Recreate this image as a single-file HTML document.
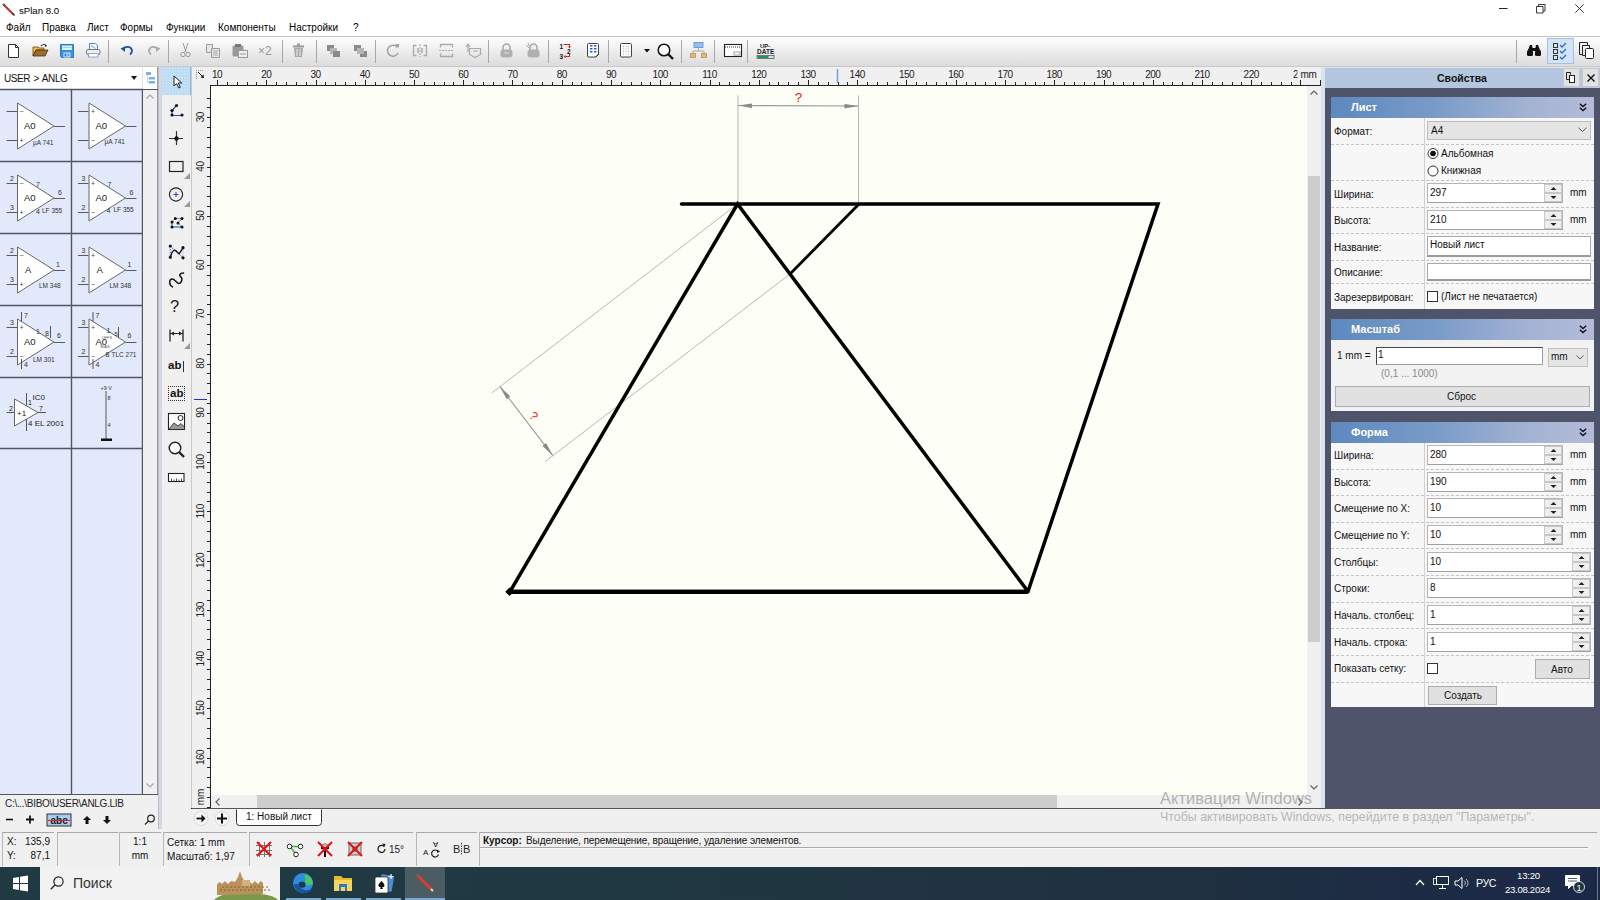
<!DOCTYPE html>
<html><head><meta charset="utf-8">
<style>
*{box-sizing:border-box;margin:0;padding:0}
html,body{width:1600px;height:900px;overflow:hidden;background:#f0f0f0;font-family:"Liberation Sans",sans-serif;font-size:10px;color:#000}
.a{position:absolute}
svg{position:absolute;overflow:visible}
.t{position:absolute;white-space:nowrap;line-height:1}
#title{left:0;top:0;width:1600px;height:36px;background:#fff}
#tb{left:0;top:36px;width:1600px;height:31px;background:linear-gradient(#fdfdfd,#f5f5f5 28%,#ececec 50%,#dcdcdc 100%);border-top:1px solid #c2c2c2;border-bottom:1px solid #c9c9c9}
.sep{position:absolute;top:5px;width:1px;height:23px;background:#a8a8a8}
#lp{left:0;top:67px;width:158px;height:761px;background:#f0f0f0}
#tools{left:162px;top:67px;width:30px;height:741px;background:#f0f0f0;border-right:1px solid #d9d9d9}
#rulh{left:192px;top:67px;width:1129px;height:19px;background:#f0f0f0}
#rulv{left:192px;top:67px;width:19px;height:741px;background:#f0f0f0}
#canvas{left:210px;top:85px;width:1098px;height:711px;background:#fdfdf7;border-left:1px solid #1a1a1a;border-top:1px solid #1a1a1a}
#vscr{left:1307px;top:86px;width:14px;height:709px;background:#f0f0f0}
#hscr{left:211px;top:795px;width:1096px;height:13px;background:#f0f0f0}
#rp{left:1325px;top:67px;width:275px;height:741px;background:#50546a}
#status{left:0;top:828px;width:1600px;height:39px;background:#f0f0f0}
#taskbar{left:0;top:867px;width:1600px;height:33px;background:#1f3540}
</style></head><body>
<!-- TITLE -->
<div id="title" class="a">
  <svg style="left:2px;top:3px" width="13" height="13"><line x1="1.5" y1="1.5" x2="11.5" y2="11.5" stroke="#c0392b" stroke-width="2.2"/><line x1="1" y1="1" x2="3" y2="3" stroke="#555" stroke-width="2"/><line x1="10.5" y1="10.5" x2="12.5" y2="12.5" stroke="#333" stroke-width="1.5"/></svg>
  <div class="t" style="left:19px;top:6px;font-size:9.6px">sPlan 8.0</div>
  <svg style="left:1499px;top:8px" width="9" height="1"><line x1="0" y1="0.5" x2="8.5" y2="0.5" stroke="#222" stroke-width="1"/></svg>
  <svg style="left:1536px;top:4px" width="10" height="10"><path d="M0.5 2.5h6.5v6.5h-6.5z M2.5 2.5v-2h6.5v6.5h-2" fill="none" stroke="#222" stroke-width="0.9"/></svg>
  <svg style="left:1575px;top:4px" width="9" height="9"><path d="M0.3 0.3L8.7 8.7M8.7 0.3L0.3 8.7" stroke="#222" stroke-width="0.9"/></svg>
  <div class="t" style="left:6px;top:23px">Файл</div>
  <div class="t" style="left:42px;top:23px">Правка</div>
  <div class="t" style="left:87px;top:23px">Лист</div>
  <div class="t" style="left:120px;top:23px">Формы</div>
  <div class="t" style="left:166px;top:23px">Функции</div>
  <div class="t" style="left:218px;top:23px">Компоненты</div>
  <div class="t" style="left:289px;top:23px">Настройки</div>
  <div class="t" style="left:353px;top:23px">?</div>
</div>
<!-- TOOLBAR -->
<div id="tb" class="a"></div>
<!-- toolbar icons, absolute page coords -->
<div class="sep" style="left:108px;top:40px"></div>
<div class="sep" style="left:168px;top:40px"></div>
<div class="sep" style="left:282px;top:40px"></div>
<div class="sep" style="left:316px;top:40px"></div>
<div class="sep" style="left:375px;top:40px"></div>
<div class="sep" style="left:488px;top:40px"></div>
<div class="sep" style="left:548px;top:40px"></div>
<div class="sep" style="left:608px;top:40px"></div>
<div class="sep" style="left:681px;top:40px"></div>
<div class="sep" style="left:714px;top:40px"></div>
<div class="sep" style="left:747px;top:40px"></div>
<div class="sep" style="left:1516px;top:40px"></div>
<!-- new -->
<svg style="left:7px;top:43px" width="14" height="16"><path d="M1.5 1.5h7l3 3v10h-10z" fill="#fff" stroke="#333" stroke-width="1"/><path d="M8.5 1.5v3h3" fill="none" stroke="#333"/></svg>
<!-- open -->
<svg style="left:32px;top:43px" width="17" height="15"><path d="M1 4h5l1 1h5v2H4L1 13z" fill="#f0c040" stroke="#6b4a10" stroke-width="0.8"/><path d="M1 13l3-6h12l-3 6z" fill="#9b6a2c" stroke="#4a300c" stroke-width="0.8"/><path d="M9 3c2-2 4-2 5 0" fill="none" stroke="#333" stroke-width="1.2"/><path d="M13 1l2 2-2 1" fill="#333"/></svg>
<!-- save -->
<svg style="left:60px;top:44px" width="14" height="14"><path d="M0.5 0.5h13v13h-12l-1-1z" fill="#3592de" stroke="#2a78c8"/><rect x="2" y="1.5" width="10" height="4.5" fill="#e6eef6"/><path d="M2.5 3.5h9" stroke="#9cc2e8" stroke-width="0.8"/><rect x="3.5" y="8.5" width="7" height="5" fill="#dfe9f5"/><rect x="4.5" y="9.5" width="2" height="3" fill="#2a78c8"/><rect x="7.5" y="9.5" width="2" height="3" fill="#5aa0e0"/></svg>
<!-- print -->
<svg style="left:86px;top:43px" width="15" height="15"><path d="M3.5 0.5h6l2 2v5h-8z" fill="#f4f8fc" stroke="#4a8ad8" stroke-width="1"/><path d="M5 2.5l4.5 3" stroke="#5a9ae0" stroke-width="0.9"/><rect x="0.5" y="6.5" width="13.5" height="5" rx="1.5" fill="#eee" stroke="#777"/><rect x="2.5" y="10.5" width="9.5" height="3.5" fill="#fff" stroke="#8aa8d0"/></svg>
<!-- undo -->
<svg style="left:120px;top:45px" width="14" height="11"><path d="M3 4c3-3 8-3 9 1.5 0 2-1 3-2 4" fill="none" stroke="#1d4fa3" stroke-width="1.8"/><path d="M0.5 3.5L5 1.5 5 7z" fill="#1d4fa3"/></svg>
<!-- redo -->
<svg style="left:147px;top:45px" width="14" height="11"><path d="M11 4c-3-3-8-3-9 1.5 0 2 1 3 2 4" fill="none" stroke="#aaa" stroke-width="1.8"/><path d="M13.5 3.5L9 1.5 9 7z" fill="#aaa"/></svg>
<!-- cut -->
<svg style="left:180px;top:43px" width="11" height="15"><path d="M3 0l3 9M8 0l-3 9" stroke="#9a9a9a" stroke-width="1"/><circle cx="3" cy="11.5" r="2.2" fill="none" stroke="#9a9a9a"/><circle cx="8" cy="11.5" r="2.2" fill="none" stroke="#9a9a9a"/></svg>
<!-- copy -->
<svg style="left:206px;top:44px" width="14" height="14"><path d="M0.5 0.5h6v8h-6z" fill="#e6e6e6" stroke="#9a9a9a"/><path d="M5.5 4.5h8v9h-8z" fill="#e6e6e6" stroke="#9a9a9a"/><path d="M7 7h5M7 9h5M7 11h5" stroke="#aaa"/></svg>
<!-- paste -->
<svg style="left:232px;top:44px" width="16" height="14"><rect x="0.5" y="1.5" width="11" height="11" rx="1.5" fill="#9a9a9a"/><rect x="3" y="0" width="6" height="3" fill="#777"/><rect x="6.5" y="6.5" width="9" height="7" fill="#eee" stroke="#999"/><path d="M8 10h6" stroke="#999"/></svg>
<!-- x2 -->
<div class="t" style="left:258px;top:45px;font-size:12px;color:#9a9a9a">×2</div>
<!-- trash -->
<svg style="left:292px;top:43px" width="13" height="15"><path d="M5 0.5h3v2h4v2h-11v-2h4z" fill="#9a9a9a"/><path d="M2 5h9l-1 9h-7z" fill="#a8a8a8"/><path d="M5 6v7M8 6v7" stroke="#eee"/></svg>
<!-- group front/back -->
<svg style="left:327px;top:45px" width="14" height="13"><rect x="0" y="0" width="7" height="6" fill="#8a8a8a"/><rect x="3" y="3" width="7" height="6" fill="#b5b5b5"/><rect x="6" y="6" width="7" height="6" fill="#8a8a8a"/></svg>
<svg style="left:354px;top:45px" width="14" height="13"><rect x="0" y="0" width="7" height="6" fill="#8a8a8a"/><rect x="6" y="6" width="7" height="6" fill="#8a8a8a"/><rect x="3" y="3" width="7" height="6" fill="#b5b5b5"/></svg>
<!-- rotate -->
<svg style="left:386px;top:43px" width="14" height="15"><path d="M11.5 4.5A5.5 5.5 0 1 0 12 10" fill="none" stroke="#a0a0a0" stroke-width="1.5"/><path d="M9 1h4v4z" fill="#a0a0a0"/></svg>
<!-- mirror h -->
<svg style="left:412px;top:44px" width="16" height="13"><path d="M4.5 1.5h-3v10h3M11.5 1.5h3v10h-3" fill="none" stroke="#aaa" stroke-width="1.3"/><path d="M8 0v13" stroke="#aaa" stroke-dasharray="2 1"/><rect x="5" y="4" width="2" height="5" fill="#bbb"/><rect x="9" y="4" width="2" height="5" fill="#bbb"/></svg>
<!-- mirror v -->
<svg style="left:439px;top:43px" width="15" height="15"><path d="M1.5 4.5v-3h12v3M1.5 10.5v3h12v-3" fill="none" stroke="#aaa" stroke-width="1.3"/><path d="M0 7.5h15" stroke="#aaa" stroke-dasharray="2 1"/></svg>
<!-- move -->
<svg style="left:465px;top:43px" width="17" height="15"><path d="M4.5 5.5h11v6l-5.5 3-5.5-3z" fill="none" stroke="#aaa" stroke-width="1.2"/><path d="M3 9V2M1 4l2-3 2 3" fill="none" stroke="#aaa" stroke-width="1.2"/><path d="M8 8h5" stroke="#aaa"/></svg>
<!-- lock -->
<svg style="left:500px;top:43px" width="13" height="15"><path d="M3 7V4.5a3.5 3.5 0 0 1 7 0V7" fill="none" stroke="#aaa" stroke-width="1.6"/><rect x="0.5" y="6.5" width="12" height="8" rx="3" fill="#b0b0b0"/><path d="M4 10h5" stroke="#ddd"/></svg>
<svg style="left:526px;top:43px" width="14" height="15"><path d="M4 7V4.5a3.5 3.5 0 0 1 7 0V7" fill="none" stroke="#aaa" stroke-width="1.6"/><rect x="1.5" y="6.5" width="12" height="8" rx="3" fill="#b0b0b0"/><path d="M0 2l3 3M2 0l1 3" stroke="#aaa"/></svg>
<!-- renumber -->
<svg style="left:559px;top:43px" width="16" height="16"><path d="M4.5 1.5H10.5V4" fill="none" stroke="#e82020" stroke-width="1.1"/><path d="M9 3.5h3l-1.5 2z" fill="#e82020"/><path d="M10.5 11V13.5H6" fill="none" stroke="#e82020" stroke-width="1.1"/><path d="M6.5 12l-2 1.5 2 1.5z" fill="#e82020"/><text x="0.5" y="6" font-size="6.5" font-weight="bold" font-family="Liberation Sans" fill="#111">1</text><text x="8" y="10.5" font-size="6.5" font-weight="bold" font-family="Liberation Sans" fill="#111">2</text><text x="0.5" y="15.5" font-size="6.5" font-weight="bold" font-family="Liberation Sans" fill="#111">3</text></svg>
<!-- page list -->
<svg style="left:587px;top:43px" width="13" height="15"><path d="M1.5 0.5h9a1 1 0 0 1 1 1v10l-2.5 2.5h-7.5a1 1 0 0 1-1-1v-11.5a1 1 0 0 1 1-1z" fill="#fff" stroke="#444" stroke-width="1"/><path d="M3 2.8h2.5M7 2.8h2.5M3 5.8h2.5M7 5.8h2.5M3 8.8h2.5M7 8.8h2.5" stroke="#2a5ae8" stroke-width="1.6"/><path d="M9 13.5l2.5-2.5" stroke="#222"/></svg>
<!-- page format -->
<svg style="left:620px;top:43px" width="13" height="15"><rect x="0.5" y="0.5" width="11" height="13.5" rx="1" fill="#fff" stroke="#444" stroke-width="1"/><path d="M3 3.5h6M3 6h6M3 8.5h6M3 11h6" stroke="#aaa" stroke-dasharray="1 1.5"/></svg>
<svg style="left:644px;top:49px" width="7" height="4"><path d="M0 0h6l-3 3.5z" fill="#111"/></svg>
<!-- zoom -->
<svg style="left:657px;top:43px" width="18" height="17"><circle cx="7" cy="7" r="5.8" fill="#fff" stroke="#111" stroke-width="1.5"/><path d="M11 11l5 5" stroke="#111" stroke-width="2.4"/></svg>
<!-- tree -->
<svg style="left:690px;top:42px" width="17" height="16"><rect x="4" y="0.5" width="9" height="5" fill="#8fc0f0" stroke="#5a8fd0" stroke-width="0.8"/><path d="M8.5 6v3M3 12v-3h11v3" fill="none" stroke="#aaa"/><rect x="0.5" y="11.5" width="5" height="4" fill="#e0b880" stroke="#c09050" stroke-width="0.8"/><rect x="11.5" y="11.5" width="5" height="4" fill="#e0b880" stroke="#c09050" stroke-width="0.8"/></svg>
<!-- screen -->
<svg style="left:724px;top:44px" width="18" height="13"><rect x="0.5" y="0.5" width="17" height="12" fill="#fff" stroke="#222" stroke-width="1.1"/><path d="M1 3h16" stroke="#333" stroke-dasharray="1 1"/><rect x="10" y="8" width="6" height="3" fill="none" stroke="#888" stroke-width="0.8"/></svg>
<!-- update -->
<svg style="left:756px;top:42px" width="19" height="17"><text x="4" y="6" font-size="6" font-weight="bold" font-family="Liberation Sans" fill="#222">UP-</text><text x="1" y="12" font-size="6.5" font-weight="bold" font-family="Liberation Sans" fill="#222">DATE</text><rect x="1" y="13.5" width="17" height="3" fill="#ddd" stroke="#333" stroke-width="0.6"/><rect x="1.5" y="14" width="11" height="2" fill="#1a9a5a"/></svg>
<!-- right: binoculars -->
<svg style="left:1527px;top:44px" width="14" height="13"><path d="M1 6l2-5h2l1 5zM8 6l1-5h2l2 5z" fill="#111"/><rect x="0" y="6" width="6" height="6" rx="1.5" fill="#111"/><rect x="8" y="6" width="6" height="6" rx="1.5" fill="#111"/><rect x="5" y="4" width="4" height="3" fill="#111"/></svg>
<div class="a" style="left:1547px;top:38px;width:27px;height:26px;background:#d4e4f4;border:1px solid #9fc3e8"></div>
<svg style="left:1552px;top:42px" width="18" height="18"><rect x="1.5" y="1.5" width="4" height="4" fill="none" stroke="#333"/><rect x="1.5" y="7.5" width="4" height="4" fill="none" stroke="#333"/><rect x="1.5" y="13.5" width="4" height="4" fill="none" stroke="#333"/><path d="M8 3l2 2 4-4M8 9l2 2 4-4M8 15l2 2 4-4" fill="none" stroke="#2a6ae0" stroke-width="1.3"/></svg>
<svg style="left:1579px;top:42px" width="16" height="18"><path d="M0.5 0.5h8v3M0.5 0.5v12h3" fill="none" stroke="#222"/><path d="M3.5 3.5h7v3M3.5 3.5v10h3" fill="none" stroke="#222"/><rect x="6.5" y="6.5" width="8" height="10" rx="1" fill="#fff" stroke="#222"/></svg>

<svg style="left:0;top:0" width="1600" height="900" font-family="Liberation Sans"><rect x="192" y="67" width="1129" height="19" fill="#f0f0f0"/><rect x="192" y="67" width="19" height="741" fill="#f0f0f0"/><path d="M217.5 80V85M227.5 82V85M237.5 82V85M247.5 82V85M256.5 82V85M266.5 80V85M276.5 82V85M286.5 82V85M296.5 82V85M306.5 82V85M316.5 80V85M325.5 82V85M335.5 82V85M345.5 82V85M355.5 82V85M365.5 80V85M375.5 82V85M384.5 82V85M394.5 82V85M404.5 82V85M414.5 80V85M424.5 82V85M434.5 82V85M444.5 82V85M453.5 82V85M463.5 80V85M473.5 82V85M483.5 82V85M493.5 82V85M503.5 82V85M512.5 80V85M522.5 82V85M532.5 82V85M542.5 82V85M552.5 82V85M562.5 80V85M572.5 82V85M581.5 82V85M591.5 82V85M601.5 82V85M611.5 80V85M621.5 82V85M631.5 82V85M641.5 82V85M650.5 82V85M660.5 80V85M670.5 82V85M680.5 82V85M690.5 82V85M700.5 82V85M710.5 80V85M719.5 82V85M729.5 82V85M739.5 82V85M749.5 82V85M759.5 80V85M769.5 82V85M778.5 82V85M788.5 82V85M798.5 82V85M808.5 80V85M818.5 82V85M828.5 82V85M838.5 82V85M847.5 82V85M857.5 80V85M867.5 82V85M877.5 82V85M887.5 82V85M897.5 82V85M906.5 80V85M916.5 82V85M926.5 82V85M936.5 82V85M946.5 82V85M956.5 80V85M966.5 82V85M975.5 82V85M985.5 82V85M995.5 82V85M1005.5 80V85M1015.5 82V85M1025.5 82V85M1035.5 82V85M1044.5 82V85M1054.5 80V85M1064.5 82V85M1074.5 82V85M1084.5 82V85M1094.5 82V85M1104.5 80V85M1113.5 82V85M1123.5 82V85M1133.5 82V85M1143.5 82V85M1153.5 80V85M1163.5 82V85M1172.5 82V85M1182.5 82V85M1192.5 82V85M1202.5 80V85M1212.5 82V85M1222.5 82V85M1232.5 82V85M1241.5 82V85M1251.5 80V85M1261.5 82V85M1271.5 82V85M1281.5 82V85M1291.5 82V85M1300.5 80V85M1320.5 80V85" stroke="#222" stroke-width="1"/><text x="217.0" y="77.5" font-size="10" text-anchor="middle" fill="#222" letter-spacing="-0.5">10</text><text x="266.2" y="77.5" font-size="10" text-anchor="middle" fill="#222" letter-spacing="-0.5">20</text><text x="315.5" y="77.5" font-size="10" text-anchor="middle" fill="#222" letter-spacing="-0.5">30</text><text x="364.8" y="77.5" font-size="10" text-anchor="middle" fill="#222" letter-spacing="-0.5">40</text><text x="414.0" y="77.5" font-size="10" text-anchor="middle" fill="#222" letter-spacing="-0.5">50</text><text x="463.2" y="77.5" font-size="10" text-anchor="middle" fill="#222" letter-spacing="-0.5">60</text><text x="512.5" y="77.5" font-size="10" text-anchor="middle" fill="#222" letter-spacing="-0.5">70</text><text x="561.8" y="77.5" font-size="10" text-anchor="middle" fill="#222" letter-spacing="-0.5">80</text><text x="611.0" y="77.5" font-size="10" text-anchor="middle" fill="#222" letter-spacing="-0.5">90</text><text x="660.2" y="77.5" font-size="10" text-anchor="middle" fill="#222" letter-spacing="-0.5">100</text><text x="709.5" y="77.5" font-size="10" text-anchor="middle" fill="#222" letter-spacing="-0.5">110</text><text x="758.8" y="77.5" font-size="10" text-anchor="middle" fill="#222" letter-spacing="-0.5">120</text><text x="808.0" y="77.5" font-size="10" text-anchor="middle" fill="#222" letter-spacing="-0.5">130</text><text x="857.2" y="77.5" font-size="10" text-anchor="middle" fill="#222" letter-spacing="-0.5">140</text><text x="906.5" y="77.5" font-size="10" text-anchor="middle" fill="#222" letter-spacing="-0.5">150</text><text x="955.8" y="77.5" font-size="10" text-anchor="middle" fill="#222" letter-spacing="-0.5">160</text><text x="1005.0" y="77.5" font-size="10" text-anchor="middle" fill="#222" letter-spacing="-0.5">170</text><text x="1054.2" y="77.5" font-size="10" text-anchor="middle" fill="#222" letter-spacing="-0.5">180</text><text x="1103.5" y="77.5" font-size="10" text-anchor="middle" fill="#222" letter-spacing="-0.5">190</text><text x="1152.8" y="77.5" font-size="10" text-anchor="middle" fill="#222" letter-spacing="-0.5">200</text><text x="1202.0" y="77.5" font-size="10" text-anchor="middle" fill="#222" letter-spacing="-0.5">210</text><text x="1251.2" y="77.5" font-size="10" text-anchor="middle" fill="#222" letter-spacing="-0.5">220</text><text x="1293" y="77.5" font-size="10" fill="#222">2</text><rect x="1297.5" y="68" width="23" height="11" fill="#f0f0f0"/><text x="1300.5" y="77.5" font-size="10" fill="#222" letter-spacing="-0.3">mm</text><path d="M837.5 69V83" stroke="#6aa6e6" stroke-width="1.5"/><path d="M207 98.5H210M207 107.5H210M207 117.5H210M207 127.5H210M207 137.5H210M207 147.5H210M207 157.5H210M207 167.5H210M207 176.5H210M207 186.5H210M207 196.5H210M207 206.5H210M207 216.5H210M207 226.5H210M207 236.5H210M207 245.5H210M207 255.5H210M207 265.5H210M207 275.5H210M207 285.5H210M207 295.5H210M207 304.5H210M207 314.5H210M207 324.5H210M207 334.5H210M207 344.5H210M207 354.5H210M207 364.5H210M207 373.5H210M207 383.5H210M207 393.5H210M207 403.5H210M207 413.5H210M207 423.5H210M207 432.5H210M207 442.5H210M207 452.5H210M207 462.5H210M207 472.5H210M207 482.5H210M207 492.5H210M207 501.5H210M207 511.5H210M207 521.5H210M207 531.5H210M207 541.5H210M207 551.5H210M207 561.5H210M207 570.5H210M207 580.5H210M207 590.5H210M207 600.5H210M207 610.5H210M207 620.5H210M207 629.5H210M207 639.5H210M207 649.5H210M207 659.5H210M207 669.5H210M207 679.5H210M207 689.5H210M207 698.5H210M207 708.5H210M207 718.5H210M207 728.5H210M207 738.5H210M207 748.5H210M207 758.5H210M207 767.5H210M207 777.5H210M207 787.5H210M207 797.5H210M207 807.5H210" stroke="#222" stroke-width="1"/><text x="0" y="0" font-size="10" text-anchor="middle" fill="#222" letter-spacing="-0.5" transform="translate(204,117.3) rotate(-90)">30</text><text x="0" y="0" font-size="10" text-anchor="middle" fill="#222" letter-spacing="-0.5" transform="translate(204,166.6) rotate(-90)">40</text><text x="0" y="0" font-size="10" text-anchor="middle" fill="#222" letter-spacing="-0.5" transform="translate(204,215.8) rotate(-90)">50</text><text x="0" y="0" font-size="10" text-anchor="middle" fill="#222" letter-spacing="-0.5" transform="translate(204,265.1) rotate(-90)">60</text><text x="0" y="0" font-size="10" text-anchor="middle" fill="#222" letter-spacing="-0.5" transform="translate(204,314.3) rotate(-90)">70</text><text x="0" y="0" font-size="10" text-anchor="middle" fill="#222" letter-spacing="-0.5" transform="translate(204,363.6) rotate(-90)">80</text><text x="0" y="0" font-size="10" text-anchor="middle" fill="#222" letter-spacing="-0.5" transform="translate(204,412.8) rotate(-90)">90</text><text x="0" y="0" font-size="10" text-anchor="middle" fill="#222" letter-spacing="-0.5" transform="translate(204,462.1) rotate(-90)">100</text><text x="0" y="0" font-size="10" text-anchor="middle" fill="#222" letter-spacing="-0.5" transform="translate(204,511.3) rotate(-90)">110</text><text x="0" y="0" font-size="10" text-anchor="middle" fill="#222" letter-spacing="-0.5" transform="translate(204,560.5) rotate(-90)">120</text><text x="0" y="0" font-size="10" text-anchor="middle" fill="#222" letter-spacing="-0.5" transform="translate(204,609.8) rotate(-90)">130</text><text x="0" y="0" font-size="10" text-anchor="middle" fill="#222" letter-spacing="-0.5" transform="translate(204,659.0) rotate(-90)">140</text><text x="0" y="0" font-size="10" text-anchor="middle" fill="#222" letter-spacing="-0.5" transform="translate(204,708.3) rotate(-90)">150</text><text x="0" y="0" font-size="10" text-anchor="middle" fill="#222" letter-spacing="-0.5" transform="translate(204,757.5) rotate(-90)">160</text><text x="0" y="0" font-size="10" text-anchor="middle" fill="#222" transform="translate(204,797) rotate(-90)">mm</text><path d="M194 399.5H207" stroke="#2a2ae8" stroke-width="1"/><path d="M198 72l5 5" stroke="#111" stroke-width="1"/><path d="M204 78l-3.5-0.5 3-3z" fill="#111"/><path d="M196 70.5h1M198 70.5h1M200 70.5h1M202 70.5h1M196.5 72v1M196.5 74v1M196.5 76v1M196.5 78v1" stroke="#999"/><path d="M191.5 67V809M210.5 85V809M210 85.5H1321" stroke="#222" stroke-width="1"/><path d="M191.5 67V808" stroke="#a0a0a0" stroke-width="1"/></svg>
<svg style="left:0;top:0" width="1600" height="900" font-family="Liberation Sans"><rect x="211" y="86" width="1096" height="709" fill="#fdfef5"/><path d="M738 95.5V204M858.5 95.5V204" stroke="#b5b5b5" stroke-width="1"/><path d="M738 105.5L858.5 106" stroke="#999" stroke-width="1.2"/><path d="M738 105.5L752 103.5V108zM858.5 106L844.5 104V108.5z" fill="#8a8a8a"/><text x="798.5" y="102" font-size="13.5" text-anchor="middle" fill="#e82020">?</text><path d="M737.5 204L492 392.8M790 274L545 461.7" stroke="#b8b8b8" stroke-width="1"/><path d="M500 386.7L552.8 455.6" stroke="#999" stroke-width="1.1"/><path d="M500.0 386.7L506.7 399.2L510.3 396.4zM552.8 455.6L542.5 445.9L546.1 443.1z" fill="#8a8a8a"/><text x="0" y="0" font-size="12" text-anchor="middle" fill="#e82020" transform="translate(531,419) rotate(42)">?</text><path d="M681.5 204H1158L1028 591.5H510L737.5 204L1028 591.5" fill="none" stroke="#000" stroke-width="3.5" stroke-linejoin="miter" stroke-linecap="round"/><path d="M510 591.8H1028" stroke="#000" stroke-width="4.2"/><path d="M859 204L790 274" stroke="#000" stroke-width="2.8"/><rect x="506.5" y="588.8" width="6" height="6" transform="rotate(45 509.5 591.8)" fill="#000"/></svg>
<div class="a" style="left:0;top:67px;width:142px;height:22px;background:#fff"></div>
<div class="t" style="left:4px;top:74px;font-size:10px;color:#111;letter-spacing:-0.4px;word-spacing:1px">USER &gt; ANLG</div>
<svg style="left:131px;top:76px" width="6" height="4"><path d="M0 0h6L3 4z" fill="#111"/></svg>
<div class="a" style="left:142px;top:67px;width:1px;height:22px;background:#e4e4e4"></div>
<div class="a" style="left:143px;top:67px;width:14px;height:22px;background:#fff"></div>
<svg style="left:145px;top:71px" width="11" height="13"><rect x="1" y="1" width="5" height="3" fill="#7ab0e8"/><rect x="4" y="6" width="6" height="2.5" fill="#7ab0e8"/><rect x="4" y="10" width="6" height="2.5" fill="#7ab0e8"/><path d="M2.5 4v7.5h1.5M2.5 7.5h1.5" stroke="#bbb" stroke-width="0.6" fill="none"/></svg>
<svg class="a" style="left:0;top:0" width="160" height="830" font-family="Liberation Sans"><rect x="0" y="89" width="143" height="706" fill="#e1e9fb"/><path d="M0 89.5H143M71.5 89V795M142.5 89V795M0 161.5H143M0 233.5H143M0 305.5H143M0 377.5H143M0 448.5H143" stroke="#50555f" stroke-width="1.4"/><g transform="translate(0,89)"><path d="M6.5 22.5H17M6.5 51.5H17M54 37.5H65" stroke="#4a4a4a" stroke-width="0.9"/><path d="M17.5 14L17.5 60L54 37Z" fill="#fff" stroke="#666" stroke-width="1"/><text x="24" y="39.5" font-size="9.5" fill="#222">A0</text><text x="19.5" y="24.5" font-size="7" fill="#444">−</text><text x="19.5" y="53.5" font-size="7" fill="#444">+</text><text x="33" y="55.5" font-size="6.5" fill="#333">µA 741</text></g><g transform="translate(71.5,89)"><path d="M6.5 22.5H17M6.5 51.5H17M54 37.5H65" stroke="#4a4a4a" stroke-width="0.9"/><path d="M17.5 14L17.5 60L54 37Z" fill="#fff" stroke="#666" stroke-width="1"/><text x="24" y="39.5" font-size="9.5" fill="#222">A0</text><text x="19.5" y="24.5" font-size="7" fill="#444">+</text><text x="19.5" y="53.5" font-size="7" fill="#444">−</text><text x="33" y="55" font-size="6.5" fill="#333">µA 741</text></g><g transform="translate(0,161)"><path d="M6.5 22.5H17M6.5 51.5H17M54 37.5H65" stroke="#4a4a4a" stroke-width="0.9"/><path d="M17.5 14L17.5 60L54 37Z" fill="#fff" stroke="#666" stroke-width="1"/><text x="24" y="39.5" font-size="9.5" fill="#222">A0</text><text x="19.5" y="24.5" font-size="7" fill="#444">−</text><text x="19.5" y="53.5" font-size="7" fill="#444">+</text><text x="10" y="20" font-size="7" fill="#333">2</text><text x="10" y="49" font-size="7" fill="#333">3</text><text x="58" y="34" font-size="7" fill="#333">6</text><text x="36" y="25.5" font-size="7" fill="#333">7</text><text x="36" y="52.5" font-size="7" fill="#333">4</text><text x="42" y="52" font-size="6.5" fill="#333">LF 355</text></g><g transform="translate(71.5,161)"><path d="M6.5 22.5H17M6.5 51.5H17M54 37.5H65" stroke="#4a4a4a" stroke-width="0.9"/><path d="M17.5 14L17.5 60L54 37Z" fill="#fff" stroke="#666" stroke-width="1"/><text x="24" y="39.5" font-size="9.5" fill="#222">A0</text><text x="19.5" y="24.5" font-size="7" fill="#444">+</text><text x="19.5" y="53.5" font-size="7" fill="#444">−</text><text x="10" y="20" font-size="7" fill="#333">3</text><text x="10" y="49" font-size="7" fill="#333">2</text><text x="58" y="34" font-size="7" fill="#333">6</text><text x="36" y="25.5" font-size="7" fill="#333">7</text><text x="35" y="52" font-size="7" fill="#333">4</text><text x="42" y="51" font-size="6.5" fill="#333">LF 355</text></g><g transform="translate(0,233)"><path d="M6.5 22.5H17M6.5 51.5H17M54 37.5H65" stroke="#4a4a4a" stroke-width="0.9"/><path d="M17.5 14L17.5 60L54 37Z" fill="#fff" stroke="#666" stroke-width="1"/><text x="25" y="39.5" font-size="9.5" fill="#222">A</text><text x="19.5" y="24.5" font-size="7" fill="#444">−</text><text x="19.5" y="53.5" font-size="7" fill="#444">+</text><text x="10" y="20" font-size="7" fill="#333">2</text><text x="10" y="49" font-size="7" fill="#333">3</text><text x="56" y="34" font-size="7" fill="#333">1</text><text x="39" y="55" font-size="6.5" fill="#333">LM 348</text></g><g transform="translate(71.5,233)"><path d="M6.5 22.5H17M6.5 51.5H17M54 37.5H65" stroke="#4a4a4a" stroke-width="0.9"/><path d="M17.5 14L17.5 60L54 37Z" fill="#fff" stroke="#666" stroke-width="1"/><text x="25" y="39.5" font-size="9.5" fill="#222">A</text><text x="19.5" y="24.5" font-size="7" fill="#444">+</text><text x="19.5" y="53.5" font-size="7" fill="#444">−</text><text x="10" y="20" font-size="7" fill="#333">3</text><text x="10" y="49" font-size="7" fill="#333">2</text><text x="56" y="34" font-size="7" fill="#333">1</text><text x="38" y="55" font-size="6.5" fill="#333">LM 348</text></g><g transform="translate(0,305)"><path d="M6.5 22.5H17M6.5 51.5H17M54 37.5H65" stroke="#4a4a4a" stroke-width="0.9"/><path d="M17.5 14L17.5 60L54 37Z" fill="#fff" stroke="#666" stroke-width="1"/><text x="24" y="39.5" font-size="9.5" fill="#222">A0</text><text x="19.5" y="24.5" font-size="7" fill="#444">+</text><text x="19.5" y="53.5" font-size="7" fill="#444">−</text><path d="M21.5 7V17M21.5 54V64M50.5 21V33" stroke="#555"/><text x="10" y="20" font-size="7" fill="#333">3</text><text x="10" y="49" font-size="7" fill="#333">2</text><text x="57" y="33" font-size="7" fill="#333">6</text><text x="24" y="13" font-size="7" fill="#333">7</text><text x="24" y="62" font-size="7" fill="#333">4</text><text x="36" y="29" font-size="7" fill="#333">1</text><text x="45" y="31" font-size="7" fill="#333">8</text><text x="33" y="57" font-size="6.5" fill="#333">LM 301</text></g><g transform="translate(71.5,305)"><path d="M6.5 22.5H17M6.5 51.5H17M54 37.5H65" stroke="#4a4a4a" stroke-width="0.9"/><path d="M17.5 14L17.5 60L54 37Z" fill="#fff" stroke="#666" stroke-width="1"/><text x="24" y="39.5" font-size="9.5" fill="#222">A0</text><text x="19.5" y="24.5" font-size="7" fill="#444">+</text><text x="19.5" y="53.5" font-size="7" fill="#444">−</text><path d="M21.5 7V17M21.5 54V64M47 22V33" stroke="#555"/><text x="10" y="20" font-size="7" fill="#333">3</text><text x="10" y="49" font-size="7" fill="#333">2</text><text x="56" y="33" font-size="7" fill="#333">6</text><text x="24" y="13" font-size="7" fill="#333">7</text><text x="24" y="62" font-size="7" fill="#333">4</text><text x="35" y="28" font-size="7" fill="#333">1</text><text x="43" y="31" font-size="6" fill="#333">5</text><text x="30" y="34" font-size="4" fill="#555">OFFS</text><text x="29" y="43" font-size="4" fill="#555">BIAS</text><text x="34" y="52" font-size="7" fill="#333">8</text><text x="40" y="52" font-size="6.5" fill="#333">TLC 271</text></g><g transform="translate(0,377)"><path d="M6.5 35.5H15M38 35.5H46M26.5 16V54" stroke="#555"/><path d="M14.5 22L14.5 49L38 35.5Z" fill="#fff" stroke="#666"/><text x="17" y="39" font-size="8" fill="#222">+1</text><text x="32.5" y="23" font-size="8" fill="#222">IC0</text><text x="28" y="27.5" font-size="7" fill="#222">1</text><text x="9" y="34" font-size="7" fill="#222">2</text><text x="39" y="34" font-size="7" fill="#222">7</text><text x="28" y="49" font-size="8" fill="#222">4 EL 2001</text></g><g transform="translate(71.5,377)"><path d="M34.5 14V62" stroke="#333" stroke-width="0.8"/><rect x="29.5" y="61.5" width="11" height="2.5" fill="#111"/><text x="29" y="13" font-size="5.5" fill="#333">+9 V</text><text x="36" y="23" font-size="5.5" fill="#333">8</text><text x="36" y="50" font-size="5.5" fill="#333">4</text></g></svg>
<div class="a" style="left:143px;top:90px;width:14px;height:704px;background:#f0f0f0"></div>
<svg style="left:146px;top:94px" width="8" height="5"><path d="M0.5 4.5L4 1L7.5 4.5" fill="none" stroke="#a8a8a8" stroke-width="1.2"/></svg>
<svg style="left:146px;top:783px" width="8" height="5"><path d="M0.5 0.5L4 4L7.5 0.5" fill="none" stroke="#a8a8a8" stroke-width="1.2"/></svg>
<div class="a" style="left:157px;top:67px;width:1px;height:728px;background:#9a9a9a"></div>
<div class="a" style="left:0;top:794px;width:158px;height:1px;background:#555"></div>
<div class="a" style="left:143px;top:89px;width:15px;height:1px;background:#555"></div>
<div class="a" style="left:158px;top:67px;width:4px;height:762px;background:#d3d9e3;border-left:1px solid #b9bdc6"></div>
<div class="t" style="left:5px;top:799px;font-size:10px;color:#222;letter-spacing:-0.3px">C:\...\BIBO\USER\ANLG.LIB</div>
<svg style="left:5px;top:813px" width="155" height="14"><path d="M1 6.5h7" stroke="#111" stroke-width="1.6"/><path d="M21 6.5h8M25 2.5v8" stroke="#111" stroke-width="1.8"/><rect x="42" y="1" width="24" height="12" fill="#a9cdf0" stroke="#333" stroke-width="1"/><text x="45.5" y="10.5" font-size="10" font-weight="bold" fill="#222" font-family="Liberation Sans">abc</text><path d="M43 7.5h22" stroke="#e02020" stroke-width="1"/><path d="M82 3l-4 4h2.5v4h3v-4h2.5z" fill="#111"/><path d="M102 11l-4-4h2.5v-4h3v4h2.5z" fill="#111"/><circle cx="146" cy="5.5" r="3.3" fill="none" stroke="#222" stroke-width="1.2"/><path d="M143.5 8l-3.5 3.5" stroke="#222" stroke-width="1.3"/></svg>
<div class="a" style="left:162px;top:67px;width:29px;height:28px;background:#bfdcf5;border-right:1px solid #8cbce8;background-image:radial-gradient(#d8ecfb 0.6px,transparent 0.8px);background-size:3px 3px"></div>
<div class="a" style="left:191px;top:67px;width:1px;height:741px;background:#c8c8c8"></div>
<svg style="left:173px;top:75px" width="10" height="15"><path d="M1 1v10l2.6-2.4 2.2 4.4 1.6-0.8-2.2-4.2h3.6z" fill="#fff" stroke="#222" stroke-width="1"/></svg>
<svg style="left:169px;top:103px" width="15" height="14"><path d="M7.5 2.5L3 7.5V12.5H13" fill="none" stroke="#2d4f9a" stroke-width="1.2"/><circle cx="7.5" cy="2.5" r="1.6" fill="#111"/><circle cx="3" cy="7.5" r="1.6" fill="#111"/><circle cx="3" cy="12" r="1.6" fill="#111"/><circle cx="13" cy="12" r="1.6" fill="#111"/></svg>
<svg style="left:169px;top:131px" width="15" height="15"><path d="M0 7.5H14M7.5 0V14" stroke="#333" stroke-width="1.2"/><circle cx="7.5" cy="7.5" r="2.2" fill="#111"/></svg>
<svg style="left:168px;top:160px" width="16" height="13"><rect x="1.5" y="1.5" width="13.5" height="10" fill="none" stroke="#222" stroke-width="1.2"/></svg>
<svg style="left:184px;top:173px" width="7" height="7"><path d="M6 0V6H0z" fill="#999"/></svg>
<svg style="left:168px;top:187px" width="16" height="16"><circle cx="8" cy="7.5" r="6.6" fill="none" stroke="#222" stroke-width="1.1"/><path d="M5.5 7.5h5M8 5v5" stroke="#2040e0" stroke-width="1"/></svg>
<svg style="left:184px;top:201px" width="7" height="7"><path d="M6 0V6H0z" fill="#999"/></svg>
<svg style="left:170px;top:216px" width="15" height="14"><path d="M5.3 2.6H12L8 7L12 11M2 6L5.3 2.6" fill="none" stroke="#2a4fa0" stroke-width="1" stroke-dasharray="1.3 0.8"/><path d="M2 11H12M2 6V11" stroke="#5a86c8" stroke-width="1.4"/><circle cx="5.3" cy="2.6" r="1.5" fill="#111"/><circle cx="12" cy="2.6" r="1.5" fill="#111"/><circle cx="8" cy="7" r="1.5" fill="#111"/><circle cx="12" cy="11" r="1.5" fill="#111"/><circle cx="2" cy="11" r="1.5" fill="#111"/><circle cx="2" cy="6" r="1.5" fill="#111"/></svg>
<svg style="left:168px;top:244px" width="17" height="17"><path d="M2.2 2.2V13.3M2.2 2.2L15 13.8" fill="none" stroke="#2030f0" stroke-width="1" stroke-dasharray="1.2 1.6"/><path d="M15 4.5V13" stroke="#8cc0f0" stroke-width="1" stroke-dasharray="1.2 1"/><path d="M2.5 13C3.5 9 4.5 6.2 6.5 6.2C8.5 6.2 10 9.5 11.2 9.8L15 3.8" fill="none" stroke="#111" stroke-width="1.4"/><rect x="0.8" y="0.8" width="3" height="2.8" rx="1" fill="#111"/><rect x="0.8" y="12" width="3" height="2.8" rx="1" fill="#111"/><circle cx="15" cy="3.7" r="1.6" fill="#111"/><circle cx="15" cy="13.8" r="1.6" fill="#111"/></svg>
<svg style="left:168px;top:271px" width="17" height="18"><path d="M4.5 15.9C1 14 0.5 8 4.5 8C7 8 8.5 12.5 10.7 12.5C13 12.5 14 9.5 13.9 7.7C13.5 5.5 11 5 11.7 3.8C12.3 2.6 14 2 15.5 2" fill="none" stroke="#111" stroke-width="1.5" stroke-linecap="round"/></svg>
<div class="t" style="left:170px;top:298px;font-size:16.5px;color:#1a1a2a">?</div>
<svg style="left:169px;top:329px" width="15" height="13"><path d="M1 0.5V12.5M14 0.5V12.5" stroke="#222" stroke-width="1.3"/><path d="M1 4.5H14" stroke="#222" stroke-width="1"/><path d="M1.5 4.5L5 2.5V6.5zM13.5 4.5L10 2.5V6.5z" fill="#222"/></svg>
<svg style="left:184px;top:343px" width="7" height="7"><path d="M6 0V6H0z" fill="#999"/></svg>
<div class="t" style="left:168px;top:360px;font-size:11.5px;font-weight:bold;color:#111">ab</div><div class="a" style="left:183px;top:361px;width:1px;height:11px;background:#333"></div>
<div class="a" style="left:168px;top:386px;width:17px;height:15px;border:1px dotted #333"></div><div class="t" style="left:170px;top:388px;font-size:11.5px;font-weight:bold;color:#111">ab</div>
<svg style="left:168px;top:413px" width="18" height="18"><rect x="0.5" y="0.5" width="16" height="16" fill="#fff" stroke="#222" stroke-width="1.1"/><path d="M1 16L6 10L10 13L13 10.5L16.5 14V16.5H1z" fill="#999" stroke="#222" stroke-width="0.8"/><circle cx="12.5" cy="5" r="2.5" fill="#fff" stroke="#222"/></svg>
<svg style="left:168px;top:441px" width="18" height="18"><circle cx="7" cy="7" r="5.8" fill="#fff" stroke="#222" stroke-width="1.4"/><path d="M11 11L16 16" stroke="#222" stroke-width="2.4"/></svg>
<svg style="left:168px;top:473px" width="17" height="10"><rect x="0.5" y="0.5" width="15.5" height="8" fill="#fff" stroke="#222" stroke-width="1.1"/><path d="M3.5 8V5.5M6 8V6.5M8.5 8V5.5M11 8V6.5M13.5 8V5.5" stroke="#222" stroke-width="0.8"/></svg><div class="a" style="left:1307px;top:86px;width:14px;height:709px;background:#f0f0f0"></div>
<div class="a" style="left:1308px;top:176px;width:12px;height:466px;background:#cdcdcd"></div>
<svg style="left:1310px;top:90px" width="8" height="5"><path d="M0.5 4.5L4 1L7.5 4.5" fill="none" stroke="#606060" stroke-width="1.2"/></svg>
<svg style="left:1310px;top:785px" width="8" height="5"><path d="M0.5 0.5L4 4L7.5 0.5" fill="none" stroke="#606060" stroke-width="1.2"/></svg>
<div class="a" style="left:211px;top:795px;width:1096px;height:13px;background:#f0f0f0"></div>
<div class="a" style="left:257px;top:795px;width:800px;height:13px;background:#cdcdcd"></div>
<svg style="left:215px;top:798px" width="5" height="8"><path d="M4.5 0.5L1 4L4.5 7.5" fill="none" stroke="#606060" stroke-width="1.2"/></svg>
<svg style="left:1298px;top:798px" width="5" height="8"><path d="M0.5 0.5L4 4L0.5 7.5" fill="none" stroke="#606060" stroke-width="1.2"/></svg>
<div class="a" style="left:192px;top:808px;width:1408px;height:1px;background:#555"></div>
<div class="a" style="left:1307px;top:795px;width:14px;height:12px;background:#f0f0f0"></div>
<div class="a" style="left:1321px;top:67px;width:4px;height:741px;background:#dde3ec"></div>
<div class="a" style="left:1325px;top:67px;width:275px;height:741px;background:#50546a"></div>
<div class="a" style="left:1325px;top:67px;width:275px;height:21px;background:#b4c7df;border-top:1px solid #d8e2ee"></div>
<div class="t" style="left:1437px;top:73px;font-size:10.5px;font-weight:bold;color:#111">Свойства</div>
<div class="a" style="left:1563px;top:68px;width:17px;height:19px;background:#e2e2e2;border:1px solid #c9c9c9"></div>
<svg style="left:1566px;top:72px" width="11" height="11"><path d="M0.5 0.5h4v2M0.5 0.5v7h2.5" fill="none" stroke="#222"/><rect x="3.5" y="3.5" width="5" height="7" fill="#fff" stroke="#222"/></svg>
<div class="a" style="left:1582px;top:68px;width:17px;height:19px;background:#e2e2e2;border:1px solid #c9c9c9"></div>
<svg style="left:1587px;top:74px" width="8" height="8"><path d="M0.5 0.5L7.5 7.5M7.5 0.5L0.5 7.5" stroke="#111" stroke-width="1.4"/></svg>
<div class="a" style="left:1331px;top:97px;width:263px;height:21px;background:linear-gradient(90deg,#5d89bf 0%,#7a9bc8 40%,#a3b3d3 75%,#b4bbd9 100%)"></div>
<div class="t" style="left:1351px;top:102px;font-size:11px;font-weight:bold;color:#fff">Лист</div>
<svg style="left:1579px;top:103px" width="8" height="9"><path d="M0.8 0.8L4 3.6L7.2 0.8M0.8 4.8L4 7.6L7.2 4.8" fill="none" stroke="#111" stroke-width="1.4"/></svg>
<div class="a" style="left:1331px;top:118px;width:263px;height:191px;background:#f7f7f7"></div>
<div class="a" style="left:1424px;top:118px;width:1px;height:191px;background:#d0d0d0"></div>
<div class="a" style="left:1331px;top:144px;width:263px;height:0;border-top:1px dashed #c4c4c4"></div>
<div class="a" style="left:1331px;top:180px;width:263px;height:0;border-top:1px dashed #c4c4c4"></div>
<div class="a" style="left:1331px;top:207px;width:263px;height:0;border-top:1px dashed #c4c4c4"></div>
<div class="a" style="left:1331px;top:233px;width:263px;height:0;border-top:1px dashed #c4c4c4"></div>
<div class="a" style="left:1331px;top:260px;width:263px;height:0;border-top:1px dashed #c4c4c4"></div>
<div class="a" style="left:1331px;top:283px;width:263px;height:0;border-top:1px dashed #c4c4c4"></div>
<div class="t" style="left:1334px;top:127px;font-size:10px;color:#111">Формат:</div>
<div class="a" style="left:1427px;top:121px;width:164px;height:19px;background:#e5e5e5;border:1px solid #bcbcbc"></div>
<div class="t" style="left:1431px;top:126px;font-size:10px;color:#111">A4</div>
<svg style="left:1578px;top:127px" width="9" height="6"><path d="M0.5 0.8L4.5 4.5L8.5 0.8" fill="none" stroke="#555" stroke-width="1"/></svg>
<svg style="left:1427px;top:147px" width="12" height="30"><circle cx="6" cy="6.5" r="5" fill="#fff" stroke="#333"/><circle cx="6" cy="6.5" r="2.8" fill="#111"/><circle cx="6" cy="24" r="5" fill="#fff" stroke="#333"/></svg>
<div class="t" style="left:1441px;top:149px;font-size:10px;color:#111">Альбомная</div>
<div class="t" style="left:1441px;top:166px;font-size:10px;color:#111">Книжная</div>
<div class="t" style="left:1334px;top:190px;font-size:10px;color:#111">Ширина:</div>
<div class="a" style="left:1427px;top:183px;width:136px;height:20px;background:#fff;border:1px solid #b5b5b5;border-bottom-color:#a0a0a0"></div>
<div class="t" style="left:1430px;top:188px;font-size:10px;color:#111">297</div>
<div class="a" style="left:1544px;top:184px;width:18px;height:9px;background:#efefef;border:1px solid #c8c8c8"></div>
<div class="a" style="left:1544px;top:193px;width:18px;height:9px;background:#efefef;border:1px solid #c8c8c8"></div>
<svg style="left:1550px;top:186px" width="7" height="14"><path d="M0.5 4L3.5 1L6.5 4zM0.5 10L3.5 13L6.5 10z" fill="#222"/></svg>
<div class="t" style="left:1570px;top:188px;font-size:10px;color:#111">mm</div>
<div class="t" style="left:1334px;top:216px;font-size:10px;color:#111">Высота:</div>
<div class="a" style="left:1427px;top:210px;width:136px;height:20px;background:#fff;border:1px solid #b5b5b5;border-bottom-color:#a0a0a0"></div>
<div class="t" style="left:1430px;top:215px;font-size:10px;color:#111">210</div>
<div class="a" style="left:1544px;top:211px;width:18px;height:9px;background:#efefef;border:1px solid #c8c8c8"></div>
<div class="a" style="left:1544px;top:220px;width:18px;height:9px;background:#efefef;border:1px solid #c8c8c8"></div>
<svg style="left:1550px;top:213px" width="7" height="14"><path d="M0.5 4L3.5 1L6.5 4zM0.5 10L3.5 13L6.5 10z" fill="#222"/></svg>
<div class="t" style="left:1570px;top:215px;font-size:10px;color:#111">mm</div>
<div class="t" style="left:1334px;top:243px;font-size:10px;color:#111">Название:</div>
<div class="a" style="left:1427px;top:236px;width:164px;height:21px;background:#fff;border:1px solid #a8a8a8;border-bottom:2px solid #9a9a9a"></div>
<div class="t" style="left:1430px;top:240px;font-size:10px;color:#111">Новый лист</div>
<div class="t" style="left:1334px;top:268px;font-size:10px;color:#111">Описание:</div>
<div class="a" style="left:1427px;top:263px;width:164px;height:18px;background:#fff;border:1px solid #a8a8a8;border-bottom:2px solid #9a9a9a"></div>
<div class="t" style="left:1334px;top:293px;font-size:10px;color:#111">Зарезервирован:</div>
<div class="a" style="left:1427px;top:291px;width:11px;height:11px;background:#fff;border:1px solid #333"></div>
<div class="t" style="left:1441px;top:292px;font-size:10px;color:#111">(Лист не печатается)</div>
<div class="a" style="left:1331px;top:319px;width:263px;height:21px;background:linear-gradient(90deg,#5d89bf 0%,#7a9bc8 40%,#a3b3d3 75%,#b4bbd9 100%)"></div>
<div class="t" style="left:1351px;top:324px;font-size:11px;font-weight:bold;color:#fff">Масштаб</div>
<svg style="left:1579px;top:325px" width="8" height="9"><path d="M0.8 0.8L4 3.6L7.2 0.8M0.8 4.8L4 7.6L7.2 4.8" fill="none" stroke="#111" stroke-width="1.4"/></svg>
<div class="a" style="left:1331px;top:340px;width:263px;height:71px;background:#f2f2f2"></div>
<div class="t" style="left:1337px;top:351px;font-size:10px;color:#111">1 mm =</div>
<div class="a" style="left:1376px;top:347px;width:167px;height:18px;background:#fff;border:1px solid #555;border-color:#444 #a0a0a0 #a0a0a0 #444"></div>
<div class="t" style="left:1378px;top:350px;font-size:10px;color:#111">1</div>
<div class="a" style="left:1548px;top:348px;width:40px;height:19px;background:#e5e5e5;border:1px solid #c0c0c0"></div>
<div class="t" style="left:1551px;top:352px;font-size:10px;color:#111">mm</div>
<svg style="left:1576px;top:355px" width="8" height="5"><path d="M0.5 0.5L4 4L7.5 0.5" fill="none" stroke="#555" stroke-width="1"/></svg>
<div class="t" style="left:1381px;top:369px;font-size:10px;color:#8a8a8a">(0,1 ... 1000)</div>
<div class="a" style="left:1335px;top:386px;width:255px;height:21px;background:#e1e1e1;border:1px solid #adadad"></div>
<div class="t" style="left:1447px;top:392px;font-size:10px;color:#111">Сброс</div>
<div class="a" style="left:1331px;top:422px;width:263px;height:21px;background:linear-gradient(90deg,#5d89bf 0%,#7a9bc8 40%,#a3b3d3 75%,#b4bbd9 100%)"></div>
<div class="t" style="left:1351px;top:427px;font-size:11px;font-weight:bold;color:#fff">Форма</div>
<svg style="left:1579px;top:428px" width="8" height="9"><path d="M0.8 0.8L4 3.6L7.2 0.8M0.8 4.8L4 7.6L7.2 4.8" fill="none" stroke="#111" stroke-width="1.4"/></svg>
<div class="a" style="left:1331px;top:443px;width:263px;height:264px;background:#f7f7f7"></div>
<div class="a" style="left:1424px;top:443px;width:1px;height:264px;background:#d0d0d0"></div>
<div class="a" style="left:1331px;top:469px;width:263px;height:0;border-top:1px dashed #c4c4c4"></div>
<div class="a" style="left:1331px;top:495px;width:263px;height:0;border-top:1px dashed #c4c4c4"></div>
<div class="a" style="left:1331px;top:522px;width:263px;height:0;border-top:1px dashed #c4c4c4"></div>
<div class="a" style="left:1331px;top:548px;width:263px;height:0;border-top:1px dashed #c4c4c4"></div>
<div class="a" style="left:1331px;top:575px;width:263px;height:0;border-top:1px dashed #c4c4c4"></div>
<div class="a" style="left:1331px;top:602px;width:263px;height:0;border-top:1px dashed #c4c4c4"></div>
<div class="a" style="left:1331px;top:628px;width:263px;height:0;border-top:1px dashed #c4c4c4"></div>
<div class="a" style="left:1331px;top:655px;width:263px;height:0;border-top:1px dashed #c4c4c4"></div>
<div class="a" style="left:1331px;top:682px;width:263px;height:0;border-top:1px dashed #c4c4c4"></div>
<div class="t" style="left:1334px;top:451px;font-size:10px;color:#111">Ширина:</div>
<div class="a" style="left:1427px;top:445px;width:136px;height:20px;background:#fff;border:1px solid #b5b5b5;border-bottom-color:#a0a0a0"></div>
<div class="t" style="left:1430px;top:450px;font-size:10px;color:#111">280</div>
<div class="a" style="left:1544px;top:446px;width:18px;height:9px;background:#efefef;border:1px solid #c8c8c8"></div>
<div class="a" style="left:1544px;top:455px;width:18px;height:9px;background:#efefef;border:1px solid #c8c8c8"></div>
<svg style="left:1550px;top:448px" width="7" height="14"><path d="M0.5 4L3.5 1L6.5 4zM0.5 10L3.5 13L6.5 10z" fill="#222"/></svg>
<div class="t" style="left:1570px;top:450px;font-size:10px;color:#111">mm</div>
<div class="t" style="left:1334px;top:478px;font-size:10px;color:#111">Высота:</div>
<div class="a" style="left:1427px;top:472px;width:136px;height:20px;background:#fff;border:1px solid #b5b5b5;border-bottom-color:#a0a0a0"></div>
<div class="t" style="left:1430px;top:477px;font-size:10px;color:#111">190</div>
<div class="a" style="left:1544px;top:473px;width:18px;height:9px;background:#efefef;border:1px solid #c8c8c8"></div>
<div class="a" style="left:1544px;top:482px;width:18px;height:9px;background:#efefef;border:1px solid #c8c8c8"></div>
<svg style="left:1550px;top:475px" width="7" height="14"><path d="M0.5 4L3.5 1L6.5 4zM0.5 10L3.5 13L6.5 10z" fill="#222"/></svg>
<div class="t" style="left:1570px;top:477px;font-size:10px;color:#111">mm</div>
<div class="t" style="left:1334px;top:504px;font-size:10px;color:#111">Смещение по X:</div>
<div class="a" style="left:1427px;top:498px;width:136px;height:20px;background:#fff;border:1px solid #b5b5b5;border-bottom-color:#a0a0a0"></div>
<div class="t" style="left:1430px;top:503px;font-size:10px;color:#111">10</div>
<div class="a" style="left:1544px;top:499px;width:18px;height:9px;background:#efefef;border:1px solid #c8c8c8"></div>
<div class="a" style="left:1544px;top:508px;width:18px;height:9px;background:#efefef;border:1px solid #c8c8c8"></div>
<svg style="left:1550px;top:501px" width="7" height="14"><path d="M0.5 4L3.5 1L6.5 4zM0.5 10L3.5 13L6.5 10z" fill="#222"/></svg>
<div class="t" style="left:1570px;top:503px;font-size:10px;color:#111">mm</div>
<div class="t" style="left:1334px;top:531px;font-size:10px;color:#111">Смещение по Y:</div>
<div class="a" style="left:1427px;top:525px;width:136px;height:20px;background:#fff;border:1px solid #b5b5b5;border-bottom-color:#a0a0a0"></div>
<div class="t" style="left:1430px;top:530px;font-size:10px;color:#111">10</div>
<div class="a" style="left:1544px;top:526px;width:18px;height:9px;background:#efefef;border:1px solid #c8c8c8"></div>
<div class="a" style="left:1544px;top:535px;width:18px;height:9px;background:#efefef;border:1px solid #c8c8c8"></div>
<svg style="left:1550px;top:528px" width="7" height="14"><path d="M0.5 4L3.5 1L6.5 4zM0.5 10L3.5 13L6.5 10z" fill="#222"/></svg>
<div class="t" style="left:1570px;top:530px;font-size:10px;color:#111">mm</div>
<div class="t" style="left:1334px;top:558px;font-size:10px;color:#111">Столбцы:</div>
<div class="a" style="left:1427px;top:552px;width:164px;height:20px;background:#fff;border:1px solid #b5b5b5;border-bottom-color:#a0a0a0"></div>
<div class="t" style="left:1430px;top:557px;font-size:10px;color:#111">10</div>
<div class="a" style="left:1572px;top:553px;width:18px;height:9px;background:#efefef;border:1px solid #c8c8c8"></div>
<div class="a" style="left:1572px;top:562px;width:18px;height:9px;background:#efefef;border:1px solid #c8c8c8"></div>
<svg style="left:1578px;top:555px" width="7" height="14"><path d="M0.5 4L3.5 1L6.5 4zM0.5 10L3.5 13L6.5 10z" fill="#222"/></svg>
<div class="t" style="left:1334px;top:584px;font-size:10px;color:#111">Строки:</div>
<div class="a" style="left:1427px;top:578px;width:164px;height:20px;background:#fff;border:1px solid #b5b5b5;border-bottom-color:#a0a0a0"></div>
<div class="t" style="left:1430px;top:583px;font-size:10px;color:#111">8</div>
<div class="a" style="left:1572px;top:579px;width:18px;height:9px;background:#efefef;border:1px solid #c8c8c8"></div>
<div class="a" style="left:1572px;top:588px;width:18px;height:9px;background:#efefef;border:1px solid #c8c8c8"></div>
<svg style="left:1578px;top:581px" width="7" height="14"><path d="M0.5 4L3.5 1L6.5 4zM0.5 10L3.5 13L6.5 10z" fill="#222"/></svg>
<div class="t" style="left:1334px;top:611px;font-size:10px;color:#111">Началь. столбец:</div>
<div class="a" style="left:1427px;top:605px;width:164px;height:20px;background:#fff;border:1px solid #b5b5b5;border-bottom-color:#a0a0a0"></div>
<div class="t" style="left:1430px;top:610px;font-size:10px;color:#111">1</div>
<div class="a" style="left:1572px;top:606px;width:18px;height:9px;background:#efefef;border:1px solid #c8c8c8"></div>
<div class="a" style="left:1572px;top:615px;width:18px;height:9px;background:#efefef;border:1px solid #c8c8c8"></div>
<svg style="left:1578px;top:608px" width="7" height="14"><path d="M0.5 4L3.5 1L6.5 4zM0.5 10L3.5 13L6.5 10z" fill="#222"/></svg>
<div class="t" style="left:1334px;top:638px;font-size:10px;color:#111">Началь. строка:</div>
<div class="a" style="left:1427px;top:632px;width:164px;height:20px;background:#fff;border:1px solid #b5b5b5;border-bottom-color:#a0a0a0"></div>
<div class="t" style="left:1430px;top:637px;font-size:10px;color:#111">1</div>
<div class="a" style="left:1572px;top:633px;width:18px;height:9px;background:#efefef;border:1px solid #c8c8c8"></div>
<div class="a" style="left:1572px;top:642px;width:18px;height:9px;background:#efefef;border:1px solid #c8c8c8"></div>
<svg style="left:1578px;top:635px" width="7" height="14"><path d="M0.5 4L3.5 1L6.5 4zM0.5 10L3.5 13L6.5 10z" fill="#222"/></svg>
<div class="t" style="left:1334px;top:664px;font-size:10px;color:#111">Показать сетку:</div>
<div class="a" style="left:1427px;top:663px;width:11px;height:11px;background:#fff;border:1px solid #333"></div>
<div class="a" style="left:1535px;top:659px;width:55px;height:20px;background:#e1e1e1;border:1px solid #adadad"></div>
<div class="t" style="left:1551px;top:665px;font-size:10px;color:#111">Авто</div>
<div class="a" style="left:1428px;top:686px;width:69px;height:19px;background:#e1e1e1;border:1px solid #adadad"></div>
<div class="t" style="left:1444px;top:691px;font-size:10px;color:#111">Создать</div><svg style="left:192px;top:808px" width="140" height="21"><circle cx="9" cy="10.5" r="7" fill="#f6f6f6" stroke="#d0d0d0" stroke-width="0.8"/><path d="M4.5 10.5h6" stroke="#111" stroke-width="1.8"/><path d="M13.5 10.5L9.5 6.5V14.5z" fill="#111"/><circle cx="30" cy="10.5" r="7" fill="#f6f6f6" stroke="#d0d0d0" stroke-width="0.8"/><path d="M25 10.5h10M30 5.5v10" stroke="#111" stroke-width="2"/><path d="M44.5 1.5V14.5Q44.5 17.5 47.5 17.5H126.5Q129.5 17.5 129.5 14.5V1.5" fill="#fff" stroke="#333" stroke-width="1"/></svg>
<div class="t" style="left:246px;top:812px;font-size:10px;color:#111">1: Новый лист</div>
<div class="a" style="left:2px;top:832px;width:52px;height:34px;border-top:1px solid #a8a8a8;border-left:1px solid #b8b8b8;background:#f0f0f0"></div>
<div class="a" style="left:57px;top:832px;width:61px;height:34px;border-top:1px solid #a8a8a8;border-left:1px solid #b8b8b8;background:#f0f0f0"></div>
<div class="a" style="left:119px;top:832px;width:42px;height:34px;border-top:1px solid #a8a8a8;border-left:1px solid #b8b8b8;background:#f0f0f0"></div>
<div class="a" style="left:163px;top:832px;width:84px;height:34px;border-top:1px solid #a8a8a8;border-left:1px solid #b8b8b8;background:#f0f0f0"></div>
<div class="a" style="left:249px;top:832px;width:164px;height:34px;border-top:1px solid #a8a8a8;border-left:1px solid #b8b8b8;background:#f0f0f0"></div>
<div class="a" style="left:416px;top:832px;width:61px;height:34px;border-top:1px solid #a8a8a8;border-left:1px solid #b8b8b8;background:#f0f0f0"></div>
<div class="a" style="left:479px;top:832px;width:1118px;height:34px;border-top:1px solid #a8a8a8;border-left:1px solid #b8b8b8;background:#f0f0f0"></div>
<div class="a" style="left:480px;top:847px;width:1108px;height:1px;background:#a8a8a8"></div>
<div class="a" style="left:480px;top:848px;width:1108px;height:1px;background:#fafafa"></div>
<div class="t" style="left:7px;top:837px;font-size:10px;color:#111">X:</div>
<div class="t" style="left:7px;top:851px;font-size:10px;color:#111">Y:</div>
<div class="t" style="left:25px;top:837px;width:25px;text-align:right;font-size:10px;color:#111">135,9</div>
<div class="t" style="left:25px;top:851px;width:25px;text-align:right;font-size:10px;color:#111">87,1</div>
<div class="t" style="left:119px;top:837px;width:42px;text-align:center;font-size:10px;color:#111">1:1</div>
<div class="t" style="left:119px;top:851px;width:42px;text-align:center;font-size:10px;color:#111">mm</div>
<div class="t" style="left:167px;top:838px;font-size:10px;color:#111">Сетка: 1 mm</div>
<div class="t" style="left:167px;top:852px;font-size:10px;color:#111">Масштаб: 1,97</div>
<svg style="left:255px;top:840px" width="160" height="19"><path d="M4.5 2v15M9.5 2v15M14.5 2v15M1 5.5h16M1 10.5h16M1 14.5h16" stroke="#666" stroke-width="0.9"/><path d="M2 2L16 16M16 2L2 16" stroke="#e81010" stroke-width="2"/><path d="M35 6.5L45 6.5M35 6.5L41 14" stroke="#38b838" stroke-width="1.4"/><circle cx="34.5" cy="6.5" r="2.3" fill="#fff" stroke="#222" stroke-width="1"/><circle cx="45.5" cy="6.5" r="2.3" fill="#fff" stroke="#222" stroke-width="1"/><circle cx="41" cy="14.5" r="2.3" fill="#fff" stroke="#222" stroke-width="1"/><circle cx="70" cy="7" r="3.2" fill="#ccc" stroke="#777"/><path d="M70 8v9M66 8h8" stroke="#111" stroke-width="2"/><path d="M63 2L77 16M77 2L63 16" stroke="#e81010" stroke-width="2"/><rect x="94" y="3" width="12" height="12" fill="#ccc" stroke="#666"/><circle cx="100" cy="9" r="3" fill="#888"/><path d="M93 2L107 16M107 2L93 16" stroke="#e81010" stroke-width="2"/><path d="M129 6.5a3.5 3.5 0 1 0 1 2.5" fill="none" stroke="#222" stroke-width="1.3"/><path d="M127 3.5l3.5 0.5-1 3z" fill="#222"/><text x="134" y="13" font-size="10" fill="#222" font-family="Liberation Sans">15°</text></svg>
<svg style="left:422px;top:841px" width="52" height="17"><text x="1" y="14" font-size="8" fill="#111" font-family="Liberation Sans">A</text><text x="0" y="0" font-size="8" fill="#111" transform="translate(10,2) rotate(180) translate(-9,0)" font-family="Liberation Sans"></text><path d="M10 1.5h6M13 1.5v6M10.5 4.5h5" stroke="none"/><text x="0" y="0" font-size="8" fill="#111" text-anchor="middle" transform="translate(13.5,1) rotate(180)" font-family="Liberation Sans">A</text><path d="M16 10.5a3.5 3.5 0 1 0 0.5 3" fill="none" stroke="#111" stroke-width="1.1"/><path d="M15 8.5l3 2-3 1.5z" fill="#111"/><text x="31" y="12" font-size="11" fill="#222" font-family="Liberation Sans">B</text><path d="M39.5 2v12" stroke="#444" stroke-dasharray="1.5 1"/><text x="41" y="12" font-size="11" fill="#222" font-family="Liberation Sans">B</text></svg>
<div class="t" style="left:483px;top:836px;font-size:10px;font-weight:bold;color:#111">Курсор:</div>
<div class="t" style="left:526px;top:836px;font-size:10px;color:#111;letter-spacing:-0.1px">Выделение, перемещение, вращение, удаление элементов.</div>
<div class="t" style="left:1160px;top:790px;font-size:16.5px;color:rgba(120,120,120,0.55)">Активация Windows</div>
<div class="t" style="left:1160px;top:811px;font-size:12.4px;color:rgba(120,120,120,0.5)">Чтобы активировать Windows, перейдите в раздел "Параметры".</div>
<div class="a" style="left:0;top:867px;width:1600px;height:33px;background:linear-gradient(90deg,#1f3a42 0%,#203841 40%,#1f3040 75%,#1b2848 100%)"></div>
<svg style="left:13px;top:876px" width="15" height="15"><path d="M0 2l6-1v6H0zM7 0.8l8-1.2V7H7zM0 8h6v6l-6-1zM7 8h8v7.5l-8-1.2z" fill="#fff"/></svg>
<div class="a" style="left:40px;top:867px;width:240px;height:33px;background:#f2f2f2"></div>
<svg style="left:50px;top:876px" width="14" height="14"><circle cx="8.5" cy="5.5" r="4.6" fill="none" stroke="#222" stroke-width="1.2"/><path d="M5.2 8.8L0.8 13.2" stroke="#222" stroke-width="1.3"/></svg>
<div class="t" style="left:73px;top:876px;font-size:14px;color:#333">Поиск</div>
<svg style="left:212px;top:868px" width="68" height="32"><path d="M2 32C8 26 20 24 34 25S60 26 66 32z" fill="#7a9a4a"/><path d="M5 27V16l3-2 2 2 3-3 3 3 3-3 4 1 3-5 2-6 2 6 3 5 4-1 3 3 3-3 3 3 3-3 2 2v11z" fill="#b8925a"/><path d="M8 22h52M10 19h48" stroke="#8a6434" stroke-width="1.2" stroke-dasharray="2 2"/><path d="M30 12h8v6h-8z" fill="#d4b080"/></svg>
<svg style="left:292px;top:872px" width="22" height="22"><circle cx="11" cy="11" r="10" fill="#2a8de0"/><path d="M12.5 2.2A9 9 0 0 1 20.8 12.5L13.5 13.5Z" fill="#4cc46c"/><ellipse cx="10" cy="12.8" rx="3.6" ry="3" fill="#1f3a42"/><path d="M1.5 12.5Q4 20.5 12.5 21Q18 20.5 20.5 16.5Q14 20 9 16.5Q6 14.5 6.5 12Z" fill="#1b4fa8"/></svg>
<div class="a" style="left:286px;top:898px;width:35px;height:2px;background:#76a9d8"></div>
<svg style="left:333px;top:874px" width="20" height="18"><path d="M1 2h7l2 2h9v13H1z" fill="#e8b830"/><path d="M1 6h18v11H1z" fill="#f6d45c"/><rect x="6" y="10" width="8" height="7" fill="#2a78d0"/><rect x="8" y="13" width="4" height="4" fill="#f6d45c"/></svg>
<div class="a" style="left:326px;top:898px;width:35px;height:2px;background:#76a9d8"></div>
<svg style="left:373px;top:873px" width="22" height="21"><rect x="7" y="2" width="13" height="16" rx="1.5" fill="#4a90d8" transform="rotate(10 13 10)"/><rect x="2" y="4" width="13" height="16" rx="1.5" fill="#fff" stroke="#333" stroke-width="0.8"/><path d="M8.5 8c-3 3-4 5-2 6 1 .5 2 0 2-.5 0 .5 1 1 2 .5 2-1 1-3-2-6z" fill="#111"/><path d="M8.5 13l-1.5 3h3z" fill="#111"/><path d="M18 1v5M15.5 3.5h5" stroke="#fff" stroke-width="1.2"/></svg>
<div class="a" style="left:366px;top:898px;width:35px;height:2px;background:#76a9d8"></div>
<div class="a" style="left:405px;top:867px;width:40px;height:33px;background:#4b5c63"></div>
<svg style="left:415px;top:873px" width="20" height="20"><path d="M2 2L17 17" stroke="#e03a2a" stroke-width="3"/><path d="M2 2l2 0.5" stroke="#666" stroke-width="2.5"/><path d="M16 16l2 2" stroke="#ddd" stroke-width="2"/></svg>
<div class="a" style="left:405px;top:898px;width:40px;height:2px;background:#76a9d8"></div>
<svg style="left:1415px;top:879px" width="10" height="7"><path d="M1 6L5 1.5L9 6" fill="none" stroke="#fff" stroke-width="1.2"/></svg>
<svg style="left:1433px;top:876px" width="16" height="14"><rect x="3.5" y="0.5" width="12" height="8" fill="none" stroke="#fff"/><path d="M9.5 9v3M6 12.5h7" stroke="#fff"/><rect x="0.5" y="2.5" width="3" height="6" fill="none" stroke="#fff" stroke-width="0.8"/></svg>
<svg style="left:1454px;top:876px" width="14" height="14"><path d="M1 5h3l4-3.5v11L4 9H1z" fill="none" stroke="#fff" stroke-width="1"/><path d="M10 4.5a3 3 0 0 1 0 5M12 3a5 5 0 0 1 0 8" fill="none" stroke="#ccc" stroke-width="0.9"/></svg>
<div class="t" style="left:1476px;top:878px;font-size:10.5px;letter-spacing:-0.3px;color:#fff">РУС</div>
<div class="t" style="left:1517px;top:871px;font-size:9.6px;letter-spacing:-0.2px;color:#fff">13:20</div>
<div class="t" style="left:1505px;top:885px;font-size:9.6px;letter-spacing:-0.3px;color:#fff">23.08.2024</div>
<svg style="left:1564px;top:874px" width="22" height="20"><path d="M1.5 1.5h14v10h-8l-3 3v-3h-3z" fill="#fff" stroke="#fff"/><path d="M4 4.5h9M4 7h9" stroke="#1f3541" stroke-width="0.8"/><circle cx="15" cy="13" r="5.5" fill="#1f3541" stroke="#fff" stroke-width="0.8"/><text x="15" y="16.5" font-size="9" text-anchor="middle" fill="#fff" font-family="Liberation Sans">1</text></svg>
<div class="a" style="left:1597px;top:867px;width:1px;height:33px;background:#6a7a80"></div>
</body></html>
